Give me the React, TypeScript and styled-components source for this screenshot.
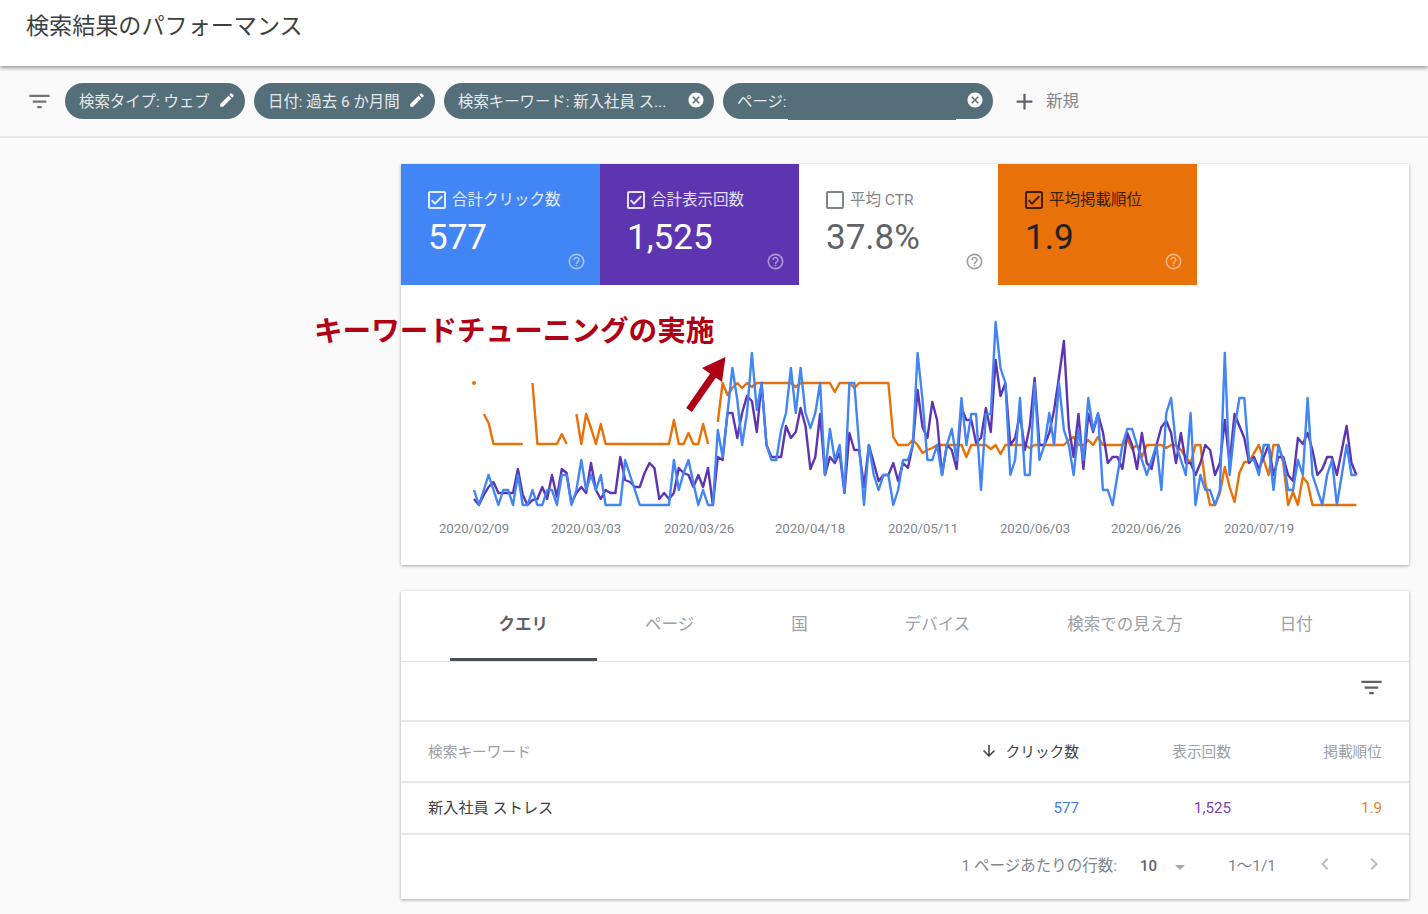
import React from 'react';
import styled, { createGlobalStyle } from 'styled-components';
import {
  MdAdd,
  MdArrowDownward,
  MdArrowDropDown,
  MdCancel,
  MdCheckBoxOutlineBlank,
  MdChevronLeft,
  MdChevronRight,
  MdEdit,
  MdFilterList,
  MdHelpOutline,
  MdOutlineCheckBox,
} from 'react-icons/md';

const GlobalStyle = createGlobalStyle`
  html, body {
    margin: 0;
    padding: 0;
    background: #fafafa;
    font-family: Roboto, "Noto Sans CJK JP", sans-serif;
  }
`;

const Page = styled.div`
  width: 1428px;
  height: 914px;
  overflow: hidden;
  background: #fafafa;
`;

const Header = styled.header`
  position: relative;
  height: 66px;
  padding: 12px 0 0 26px;
  box-sizing: border-box;
  background: #fff;
  box-shadow: 0 2px 4px rgba(0, 0, 0, 0.4);
`;

const Title = styled.h1`
  margin: 0;
  font-size: 23.1px;
  line-height: 30px;
  font-weight: 400;
  color: #3c4043;
`;

const FilterBar = styled.div`
  height: 72px;
  box-sizing: border-box;
  padding-left: 25.5px;
  display: flex;
  align-items: center;
  border-bottom: 2px solid #e8e8e8;
`;

const FilterIcon = styled(MdFilterList)`
  font-size: 27px;
  color: #757575;
  margin-right: 12.5px;
`;

const Chip = styled.div<{ $width: number }>`
  position: relative;
  width: ${(p) => p.$width}px;
  height: 36px;
  box-sizing: border-box;
  margin-right: 9px;
  padding: 0 9px 2px 14px;
  border-radius: 18px;
  display: flex;
  align-items: center;
  justify-content: space-between;
  background: #546e7a;
  color: #e6ebed;
  font-size: 15.4px;
  white-space: nowrap;
  svg {
    flex: none;
    font-size: 18px;
    color: #fff;
  }
`;

// the page address is blanked out in the picture; the patch sticks out a little
const RedactedStrip = styled.span`
  position: absolute;
  left: 65px;
  bottom: -0.5px;
  width: 168px;
  height: 3px;
  background: #546e7a;
`;

const NewFilter = styled.div`
  margin-left: 8.5px;
  padding-bottom: 2px;
  display: flex;
  align-items: center;
  gap: 8.5px;
  font-size: 16.5px;
  color: #80868b;
  svg {
    margin-top: 2px;
    font-size: 27px;
    color: #5f6368;
  }
`;

const Main = styled.main`
  width: 1008px;
  margin-left: 401px;
  padding-top: 26px;
`;

const Card = styled.section`
  position: relative;
  background: #fff;
  box-shadow: 0 1px 3px rgba(60, 64, 67, 0.45);
`;

const Tiles = styled.div`
  display: flex;
`;

const tileColors = {
  blue: { bg: '#4285f4', label: '#e3edfd', value: '#fff', help: '#a6c6fa' },
  purple: { bg: '#5e35b1', label: '#e6e0f4', value: '#fff', help: '#ae9ad8' },
  white: { bg: '#fff', label: '#80868b', value: '#5f6368', help: '#9e9e9e' },
  orange: { bg: '#e8710a', label: '#3a2000', value: '#202124', help: '#f4b885' },
};

type Tone = keyof typeof tileColors;

const Tile = styled.div<{ $tone: Tone }>`
  width: 199px;
  height: 121px;
  box-sizing: border-box;
  padding: 22px 14px 14px 27px;
  display: flex;
  flex-direction: column;
  background: ${(p) => tileColors[p.$tone].bg};
  color: ${(p) => tileColors[p.$tone].label};
`;

const TileLabel = styled.div`
  height: 24px;
  display: flex;
  align-items: center;
  gap: 3px;
  margin-left: -3px;
  font-size: 15.5px;
  svg {
    margin-top: 3px;
    font-size: 24px;
  }
`;

const TileValue = styled.div<{ $tone: Tone }>`
  margin-top: 16px;
  font-size: 35px;
  line-height: 24px;
  color: ${(p) => tileColors[p.$tone].value};
`;

const TileHelp = styled(MdHelpOutline)<{ $tone: Tone }>`
  flex: none;
  margin-top: auto;
  align-self: flex-end;
  font-size: 19px;
  color: ${(p) => tileColors[p.$tone].help};
`;

const ChartSvg = styled.svg`
  display: block;
  width: 1008px;
  height: 280px;
  overflow: visible;
  text {
    font-family: Roboto, sans-serif;
    font-size: 13.2px;
    fill: #80868b;
    text-anchor: middle;
  }
`;

const Annotation = styled.div`
  position: absolute;
  left: -87px;
  top: 148px;
  font-size: 28.6px;
  line-height: 38px;
  font-weight: 700;
  color: #b00016;
  white-space: nowrap;
`;

const TableCard = styled(Card)`
  margin-top: 26px;
  height: 308px;
`;

const Tabs = styled.div`
  height: 71px;
  box-sizing: border-box;
  padding-left: 49px;
  display: flex;
  border-bottom: 1px solid #e4e4e4;
`;

const Tab = styled.div<{ $active?: boolean }>`
  padding: 0 48.5px 3px;
  height: 70px;
  box-sizing: border-box;
  display: flex;
  align-items: center;
  font-size: 16.5px;
  font-weight: ${(p) => (p.$active ? 700 : 400)};
  color: ${(p) => (p.$active ? '#5f6368' : '#9aa0a6')};
  border-bottom: 3px solid ${(p) => (p.$active ? '#4a4f54' : 'transparent')};
`;

const TableTools = styled.div`
  height: 60px;
  box-sizing: border-box;
  padding: 0 24px 7px 0;
  display: flex;
  align-items: center;
  justify-content: flex-end;
  border-bottom: 2px solid #e8e8e8;
  svg {
    font-size: 27px;
    color: #5f6368;
  }
`;

const Row = styled.div<{ $height: number }>`
  height: ${(p) => p.$height}px;
  box-sizing: border-box;
  padding: 0 27px;
  display: grid;
  grid-template-columns: 1fr 152px 152px 151px;
  align-items: center;
  font-size: 14.7px;
  border-bottom: 2px solid #e8e8e8;
`;

const HeadCell = styled.div<{ $right?: boolean; $active?: boolean }>`
  margin-top: -2px;
  display: flex;
  align-items: center;
  justify-content: ${(p) => (p.$right ? 'flex-end' : 'flex-start')};
  gap: 8px;
  color: ${(p) => (p.$active ? '#3c4043' : '#9aa0a6')};
  svg {
    font-size: 18px;
  }
`;

const KeywordCell = styled.div`
  margin-top: -4px;
  font-size: 15.2px;
  color: #3c4043;
`;

const ValueCell = styled.div<{ $color: string }>`
  text-align: right;
  font-size: 15.2px;
  color: ${(p) => p.$color};
`;

const Pagination = styled.div`
  height: 64px;
  box-sizing: border-box;
  padding: 0 23px 6px 0;
  display: flex;
  align-items: center;
  justify-content: flex-end;
  font-size: 15.5px;
  color: #80868b;
`;

const PageSize = styled.span`
  margin: 4px 0 0 23px;
  font-size: 15px;
  font-weight: 500;
  color: #5f6368;
`;

const SizeCaret = styled(MdArrowDropDown)`
  margin: 6px 0 0 11px;
  font-size: 24px;
  color: #a8a8a8;
`;

const Range = styled.span`
  margin: 0 37px 0 36px;
`;

const PageArrow = styled.div`
  display: flex;
  font-size: 24px;
  color: #bdbdbd;
  & + & {
    margin-left: 25px;
  }
`;

// y positions traced from the chart, one per day
const clicks = [
  490, 505, 490, 475, 490, 505, 490, 490, 505, 475, 505, 505, 490, 505, 505, 490, 490, 505, 475, 475,
  505, 490, 460, 490, 475, 490, 475, 505, 505, 505, 505, 460, 475, 490, 505, 505, 505, 505, 505, 505,
  505, 460, 490, 473, 460, 483, 505, 490, 505, 505, 430, 457, 413, 368, 400, 445, 413, 353, 410, 383,
  445, 460, 460, 430, 413, 368, 413, 368, 413, 428, 413, 383, 475, 429, 460, 445, 492, 383, 383, 445,
  505, 445, 475, 490, 475, 475, 505, 490, 460, 460, 445, 353, 400, 460, 460, 445, 475, 445, 429, 460,
  398, 445, 414, 414, 490, 414, 414, 322, 368, 383, 475, 460, 398, 475, 475, 383, 460, 445, 413, 445,
  383, 430, 445, 475, 430, 460, 398, 430, 413, 490, 490, 505, 475, 445, 429, 429, 445, 460, 475, 460,
  445, 490, 413, 398, 445, 460, 475, 413, 505, 475, 490, 490, 505, 490, 353, 475, 429, 398, 398, 460,
  460, 475, 445, 445, 490, 445, 460, 490, 490, 460, 475, 398, 475, 490, 505, 475, 460, 505, 475, 445,
  475, 475,
];

const impressions = [
  499, 505, 495, 487, 482, 493, 493, 493, 493, 469, 495, 505, 500, 499, 487, 499, 475, 497, 469, 473,
  503, 493, 487, 493, 463, 490, 499, 490, 493, 493, 457, 480, 482, 487, 487, 473, 463, 468, 499, 493,
  499, 493, 468, 473, 475, 487, 475, 487, 468, 505, 457, 460, 413, 413, 438, 413, 396, 401, 432, 383,
  445, 457, 457, 457, 426, 438, 432, 408, 426, 469, 457, 414, 475, 457, 463, 453, 493, 433, 450, 450,
  487, 445, 463, 481, 475, 475, 463, 481, 463, 468, 445, 390, 427, 438, 402, 420, 475, 445, 450, 469,
  408, 420, 420, 443, 438, 408, 432, 360, 396, 383, 445, 438, 414, 450, 426, 378, 445, 445, 433, 410,
  377, 341, 427, 457, 414, 469, 414, 432, 414, 432, 463, 457, 457, 469, 433, 445, 469, 433, 463, 469,
  445, 427, 421, 433, 463, 433, 463, 463, 475, 463, 445, 450, 475, 463, 420, 463, 414, 426, 438, 463,
  457, 469, 457, 445, 475, 457, 457, 475, 481, 438, 444, 433, 450, 475, 469, 457, 457, 475, 450, 426,
  463, 475,
];

const flat = (y: number, n: number) => Array.from({ length: n }, () => y);

const position: (number | null)[] = [
  383, null,
  414, 423, ...flat(444, 7), null,
  383, ...flat(444, 5), 434, 444, null,
  414, 444, 414, 428, 444, 424, ...flat(444, 14), 420, 444, 444, 433, 444, 444, 424, 444, null,
  422, 383, 395, 388, 383, 388, 383, 387, ...flat(383, 8), 387, ...flat(383, 7), 392, 383, 383, 383, 388,
  ...flat(383, 7), 437, 445, 445, 445, 440, 445, 453, 450, 448, ...flat(445, 6), 457, ...flat(445, 4),
  449, 445, 454, ...flat(445, 5), 448, ...flat(445, 7), 440, 437, 445, 445, 440, 445, 437, ...flat(445, 5),
  439, 449, 445, 457, 445, 445, 445, 445, 448, 445, 445, 450, 457, 463, 445, 445, 483, 505, 505, 493,
  467, 487, 502, 473, 462, 462, 453, 445, 460, 475, 445, 445, 463, 505, 492, 505, 477, 483, ...flat(505, 10),
];

const xAt = (i: number) => 474 + i * 4.875;

const toPoints = (ys: number[]) => ys.map((y, i) => `${xAt(i).toFixed(1)},${y}`).join(' ');

// position has gaps: each run of days with data becomes its own line
const toSegments = (ys: (number | null)[]) => {
  const runs: string[] = [];
  let current: string[] = [];
  ys.forEach((y, i) => {
    if (y === null) {
      if (current.length > 1) runs.push(current.join(' '));
      current = [];
    } else {
      current.push(`${xAt(i).toFixed(1)},${y}`);
    }
  });
  if (current.length > 1) runs.push(current.join(' '));
  return runs;
};

const axisLabels = [
  { x: 474, label: '2020/02/09' },
  { x: 586, label: '2020/03/03' },
  { x: 699, label: '2020/03/26' },
  { x: 810, label: '2020/04/18' },
  { x: 923, label: '2020/05/11' },
  { x: 1035, label: '2020/06/03' },
  { x: 1146, label: '2020/06/26' },
  { x: 1259, label: '2020/07/19' },
];

const tiles: { tone: Tone; label: string; value: string; checked: boolean }[] = [
  { tone: 'blue', label: '合計クリック数', value: '577', checked: true },
  { tone: 'purple', label: '合計表示回数', value: '1,525', checked: true },
  { tone: 'white', label: '平均 CTR', value: '37.8%', checked: false },
  { tone: 'orange', label: '平均掲載順位', value: '1.9', checked: true },
];

const tabs = ['クエリ', 'ページ', '国', 'デバイス', '検索での見え方', '日付'];

const Chart = () => (
  <ChartSvg viewBox="401 285 1008 280" fill="none">
    <circle cx={474} cy={383} r={2} fill="#e8710a" />
    {toSegments(position).map((points) => (
      <polyline key={points} points={points} stroke="#e8710a" strokeWidth={2.4} strokeLinejoin="round" />
    ))}
    <polyline points={toPoints(impressions)} stroke="#5e35b1" strokeWidth={2.4} strokeLinejoin="round" />
    <polyline points={toPoints(clicks)} stroke="#4285f4" strokeWidth={2.4} strokeLinejoin="round" />
    <path d="M689 410 L719 367" stroke="#b00016" strokeWidth={7} />
    <polygon points="725.5,357 722,382 702,368" fill="#b00016" />
    {axisLabels.map((a) => (
      <text key={a.label} x={a.x} y={533}>
        {a.label}
      </text>
    ))}
  </ChartSvg>
);

export default function App() {
  return (
    <Page>
      <GlobalStyle />
      <Header>
        <Title>検索結果のパフォーマンス</Title>
      </Header>
      <FilterBar>
        <FilterIcon />
        <Chip $width={180}>
          検索タイプ: ウェブ
          <MdEdit />
        </Chip>
        <Chip $width={181}>
          日付: 過去 6 か月間
          <MdEdit />
        </Chip>
        <Chip $width={270}>
          検索キーワード: 新入社員 ス...
          <MdCancel />
        </Chip>
        <Chip $width={270}>
          ページ:
          <RedactedStrip />
          <MdCancel />
        </Chip>
        <NewFilter>
          <MdAdd />
          新規
        </NewFilter>
      </FilterBar>
      <Main>
        <Card>
          <Tiles>
            {tiles.map((t) => (
              <Tile key={t.label} $tone={t.tone}>
                <TileLabel>
                  {t.checked ? <MdOutlineCheckBox /> : <MdCheckBoxOutlineBlank />}
                  {t.label}
                </TileLabel>
                <TileValue $tone={t.tone}>{t.value}</TileValue>
                <TileHelp $tone={t.tone} />
              </Tile>
            ))}
          </Tiles>
          <Chart />
          <Annotation>キーワードチューニングの実施</Annotation>
        </Card>
        <TableCard>
          <Tabs>
            {tabs.map((tab, i) => (
              <Tab key={tab} $active={i === 0}>
                {tab}
              </Tab>
            ))}
          </Tabs>
          <TableTools>
            <MdFilterList />
          </TableTools>
          <Row $height={61}>
            <HeadCell>検索キーワード</HeadCell>
            <HeadCell $right $active>
              <MdArrowDownward />
              クリック数
            </HeadCell>
            <HeadCell $right>表示回数</HeadCell>
            <HeadCell $right>掲載順位</HeadCell>
          </Row>
          <Row $height={52}>
            <KeywordCell>新入社員 ストレス</KeywordCell>
            <ValueCell $color="#3f7fdc">577</ValueCell>
            <ValueCell $color="#7b3fb5">1,525</ValueCell>
            <ValueCell $color="#e8812a">1.9</ValueCell>
          </Row>
          <Pagination>
            1 ページあたりの行数:
            <PageSize>10</PageSize>
            <SizeCaret />
            <Range>1〜1/1</Range>
            <PageArrow>
              <MdChevronLeft />
            </PageArrow>
            <PageArrow>
              <MdChevronRight />
            </PageArrow>
          </Pagination>
        </TableCard>
      </Main>
    </Page>
  );
}
